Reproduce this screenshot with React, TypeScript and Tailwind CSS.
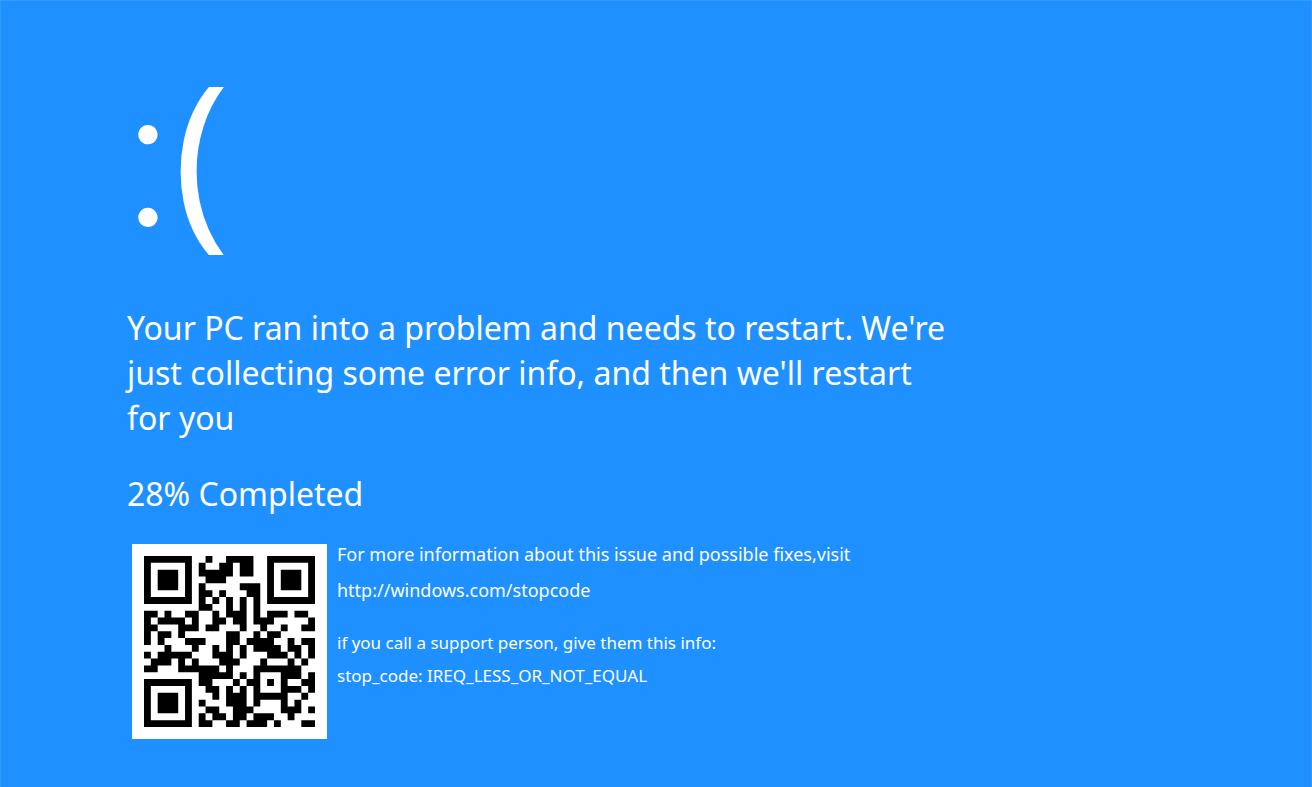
const QR_ROWS = [
  '1111111001001111001111111',
  '1000001010011011001000001',
  '1011101011111011001011101',
  '1011101001110000001011101',
  '1011101010000011101011101',
  '1000001011010001101000001',
  '1111111010101010101111111',
  '0000000011001010100000000',
  '1101001100101110101110110',
  '1011110100110110111000001',
  '1100011101100010010010011',
  '1011010000001100101100000',
  '1010001110001101111001011',
  '0001000100101010111101101',
  '1011111000111010001110101',
  '0111010100011100010001010',
  '1100011111101000111111100',
  '0000000011111010100011101',
  '1111111011000101101010011',
  '1000001001101010100011101',
  '1011101000101110111110010',
  '1011101010001110100010100',
  '1011101001100111000011101',
  '1000001010110110111001000',
  '1111111011001101110100011',
];

const qrPath = QR_ROWS.map((row, y) =>
  Array.from(row.matchAll(/1+/g), (run) => {
    const w = run[0].length;
    return `M${run.index} ${y}h${w}v1h-${w}z`;
  }).join(''),
).join('');

function QrCode() {
  return (
    <div className="w-[195px] shrink-0 bg-white p-3">
      <svg viewBox="0 0 25 25" className="block w-full" role="img" aria-label="QR code">
        <path d={qrPath} fill="#000" />
      </svg>
    </div>
  );
}

export default function App() {
  return (
    <main className="min-h-screen border border-[#3399ff] bg-[#1e90ff] px-[126px] pt-6 pb-12 font-['Noto_Sans',sans-serif] text-white">
      <div className="-ml-1 h-[240px] font-['Open_Sans'] text-[192px] leading-[240px]">
        <span className="font-['Lato'] text-[208px] font-light">:</span>(
      </div>
      <h1 className="mt-10 max-w-[830px] text-[32px] leading-[45px]">
        Your PC ran into a problem and needs to restart. We're just collecting some error info, and
        then we'll restart for you
      </h1>
      <p className="mt-[31px] text-[32px] leading-[45px]">28% Completed</p>
      <div className="mt-7 flex gap-[10px] pl-[5px]">
        <QrCode />
        <div className="leading-[20px]">
          <p className="text-[18px]">For more information about this issue and possible fixes,visit</p>
          <p className="mt-4 text-[18px]">
            <a href="http://windows.com/stopcode">http://windows.com/stopcode</a>
          </p>
          <p className="mt-[33px] text-[17px]">if you call a support person, give them this info:</p>
          <p className="mt-[13px] text-[17px]">stop_code: IREQ_LESS_OR_NOT_EQUAL</p>
        </div>
      </div>
    </main>
  );
}
